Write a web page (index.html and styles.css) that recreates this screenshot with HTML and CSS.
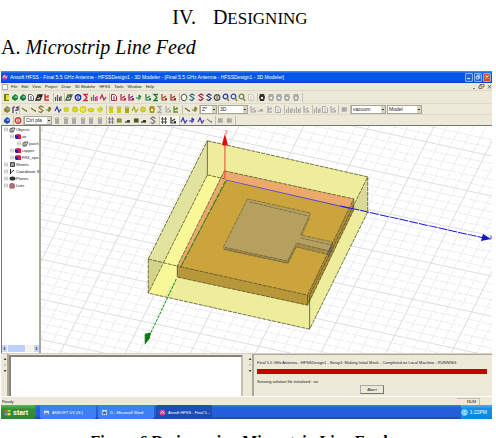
FILE: index.html
```html
<!DOCTYPE html>
<html lang="en">
<head>
<meta charset="utf-8">
<title>IV. Designing</title>
<link rel="stylesheet" href="styles.css">
</head>
<body>
<h1>IV.<span class="heading-name">D<small>ESIGNING</small></span></h1>
<h2>A. <em>Microstrip Line Feed</em></h2>
<figure>
  <div class="desktop">
    <header class="titlebar">
      <svg class="app-icon" viewBox="0 0 8 8"><circle cx="4" cy="4" r="3.5" fill="#d5487c"/><path d="M1 5l2-3 2 3 2-2" fill="none" stroke="#fff"/></svg>
      <span class="title">Ansoft HFSS - Final 5.5 GHz Antenna - HFSSDesign1 - 3D Modeler - [Final 5.5 GHz Antenna - HFSSDesign1 - 3D Modeler]</span>
      <button class="win" aria-label="Minimize"><svg viewBox="0 0 8 8"><path d="M2 6h3" stroke="#fff" stroke-width="1.6"/></svg></button>
      <button class="win" aria-label="Restore"><svg viewBox="0 0 8 8"><path d="M3 3V1.5h3.5V5H5M1.5 3.5H5v3H1.5z" fill="none" stroke="#fff"/></svg></button>
      <button class="win close" aria-label="Close"><svg viewBox="0 0 8 8"><path d="M2 2l4 4M6 2L2 6" stroke="#fff" stroke-width="1.4"/></svg></button>
    </header>
    <nav class="menubar">
      <svg class="doc-icon" viewBox="0 0 6 6"><path d="M.5.5h5v5h-5z" fill="#fff" stroke="#aaa"/></svg>
      <a href="#">File</a><a href="#">Edit</a><a href="#">View</a><a href="#">Project</a><a href="#">Draw</a><a href="#">3D Modeler</a><a href="#">HFSS</a><a href="#">Tools</a><a href="#">Window</a><a href="#">Help</a>
      <span class="mdi"><svg viewBox="0 0 20 7"><path d="M1 5.5h2M8 3V1.5h4V4h-1M7 3h3v2.500H7zM16 2l3 3.500M19 2l-3 3.500" fill="none" stroke="#555" stroke-width=".8"/></svg></span>
    </nav>
    <div class="toolbar row-file">
      <div class="group" data-icons="book:#777c00 cubes:#188a28 cubes:#167e30 page:#667 pen:#222 cut:#d02828"></div>
      <div class="group" data-icons="bars:#555"></div>
      <div class="group" data-icons="pen:#464 ring:#2029a8 zig:#d22050 bars:#e0208c wave:#b12350"></div>
      <div class="group" data-icons="page:#a03050 chart:#b62448 chart:#8a2070 arrow:#238a48 chart:#288050 zig:#237c40 chart:#a04028 chart:#a02828"></div>
      <div class="group" data-icons="hand:#555 turn:#246a88 turn:#a02050 turn:#223c80 ring:#555 lens:#2838b8 lens:#3450a0 lens:#7b8030 page:#ccc8b8"></div>
      <div class="group" data-icons="robot:#333 robot:#aaa robot:#aaa robot:#aaa robot:#aaa"></div>
    </div>
    <div class="toolbar row-draw">
      <div class="group" data-icons="cubes:#8b8428 help:#335"></div>
      <div class="group" data-icons="line:#777820 line:#777820 turn:#8b7130 arrow:#6b7130 wave:#343ba8 box:#d8d810 disc:#dddc00 ring:#d8cf00 oval:#dddc00 cubes:#dddc20"></div>
      <div class="group" data-icons="can:#d4d000 can:#d4c800 can:#a8aa00 wave:#a8aa00 disc:#d8d420 robot:#b09a20 zig:#aaa chart:#aaa cut:#668a20"></div>
      <div class="group" data-icons="line:#666a20 arrow:#777820"></div>
      <select aria-label="Plane"><option>Z*</option></select>
      <select aria-label="Movement"><option>3D</option></select>
      <div class="group" data-icons="chart:#aaa flag:#aaa cut:#aaa page:#aaa"></div>
      <div class="group" data-icons="bars:#aaa bars:#aaa chart:#aaa"></div>
      <div class="group" data-icons="bars:#aaa page:#aaa chart:#aaa"></div>
      <div class="group" data-icons="box:#aaa"></div>
      <select aria-label="Material"><option>vacuum</option></select>
      <select aria-label="Type"><option>Model</option></select>
    </div>
    <div class="toolbar row-snap">
      <div class="group" data-icons="cubes:#174dc0"></div>
      <div class="group" data-icons="ring:#c63b3b"></div>
      <select aria-label="Object"><option>Ctrl pla</option></select>
      <div class="group" data-icons="can:#aaa can:#aaa can:#aaa can:#aaa can:#aaa can:#aaa"></div>
      <div class="group" data-icons="grid:#777 box:#8a9028 flag:#444 box:#4d5520 flag:#333 turn:#777"></div>
      <div class="group pressed" data-icons="grid:#444 chart:#333"></div>
      <div class="group" data-icons="wave:#3338a8 arrow:#3338a8 wave:#4438a8 line:#888"></div>
      <div class="group" data-icons="box:#aaa box:#aaa"></div>
    </div>
    <main class="workspace">
      <aside class="side">
        <ul class="tree">
          <li data-node="wire"><span>Objects</span></li>
          <li class="l1" data-node="cube"><span>air</span></li>
          <li class="l2" data-node="wire"><span>patch</span></li>
          <li class="l1" data-node="cube"><span>copper</span></li>
          <li class="l1" data-node="cube"><span>FR4_epo</span></li>
          <li data-node="sheet"><span>Sheets</span></li>
          <li data-node="axes"><span>Coordinate S</span></li>
          <li data-node="plane"><span>Planes</span></li>
          <li data-node="list"><span>Lists</span></li>
        </ul>
        <div class="hscroll"><button aria-label="Scroll left">‹</button><i></i><button aria-label="Scroll right">›</button></div>
      </aside>
      <svg class="scene" viewBox="41 126 450 227" preserveAspectRatio="xMidYMid slice" role="img" aria-label="Patch antenna model">
        <g id="grid"></g>
        <!-- air box -->
        <path d="M207 141L367 177V212L309 329L148 293V259Z" fill="#eded9b"/>
        <path d="M207 141V175L148 293V259Z" fill="#e2e39e"/>
        <path d="M207 175L224 179L178 277L162 297L148 293Z" fill="#f8f898"/>
        <path d="M367 177V212L352 209Z" fill="#d9d999"/>
        <path d="M148 259L162 262L148 293Z" fill="#d3d38b"/>
        <!-- substrate -->
        <path d="M224 171L353 199V210L307 305L177 277V266Z" fill="#eba96c"/>
        <path d="M226 181L351 208L307 295L180 267Z" fill="#cba53b"/>
        <path d="M177 266L307 295V305L177 277Z" fill="#b8963a"/>
        <path d="M353 200L353 210L307 305V295Z" fill="#b08c35"/>
        <!-- patch and feed -->
        <path d="M247 202L310 217L301 238L332 245L329 255L296 247L288 264L223 250Z" fill="#a38c49"/>
        <path d="M247 199L310 213L300 235L332 242L329 251L296 243L287 261L223 247Z" fill="#b6a05f"/>
        <path d="M332 242V250L327 259L328 250Z" fill="#6d706e"/>
        <g class="edges">
          <path d="M207 141L367 177L309 295M148 259L207 141M367 177V212L309 329L148 293V259M207 175L148 293M207 175L224 179M148 259L177 266"/>
          <path class="solid" d="M207 141V175M309 295V329M177 266V277M307 295V305"/>
          <path d="M224 171L353 199L307 295L177 266ZM353 199V210L307 305L177 277M226 181L180 267"/>
          <path class="thin" d="M247 199L310 213L300 235L332 242L329 251L296 243L287 261L223 247ZM249 202L308 216M300 238L331 245M296 247L329 255M223 249L287 263L296 246"/>
        </g>
        <path d="M225 180L352 209" stroke="#5548d8"/>
        <path d="M340 206L483 238" stroke="#1a1ae0" stroke-dasharray="9 1"/>
        <path d="M482 234L490 239L480 241Z" fill="#1115c8"/><path d="M489 236l2 3M491 236l-2 4" stroke="#5555ee" stroke-width=".7"/>
        <path d="M225 181L180 268" stroke="#329321" stroke-dasharray="5 2"/>
        <path d="M176 279L149 336" stroke="#179a20" stroke-dasharray="3 1"/>
        <path d="M145 334L150 333L149 338L145 343Z" fill="#08780e" stroke="#08780e"/>
        <path d="M224.500 179V144" stroke="#f04538"/>
        <path d="M224.500 134L221.500 145Q224.500 147 227.500 145Z" fill="#e00c12"/><path d="M225 131h2l-2 3h2" fill="none" stroke="#f05555" stroke-width=".7"/>
      </svg>
    </main>
    <section class="docks">
      <div class="handle"><b>▴</b><b>▫</b><b>▾</b></div>
      <div class="messages"></div>
      <div class="handle"><b>▴</b><b>▫</b><b>▾</b></div>
      <div class="progress">
        <label for="run">Final 5.5 GHz Antenna - HFSSDesign1 - Setup1: Making Initial Mesh - Completed on Local Machine - RUNNING</label>
        <progress id="run" value="100" max="100"></progress>
        <p>Sensing solution file initialized : no</p>
        <button class="abort">Abort</button>
      </div>
    </section>
    <footer class="status"><span>Ready</span><span class="num">NUM</span></footer>
    <nav class="taskbar">
      <button class="start"><svg viewBox="0 0 8 8"><path d="M.5 1.500L3.500 1v2.800L.5 4z" fill="#f05030"/><path d="M4 1l3.500-.5V3.500L4 3.800z" fill="#8cdd38"/><path d="M.5 4.500h3V7.500L.5 7z" fill="#5797ff"/><path d="M4 4.500h3.500V7L4 7.500z" fill="#ffd438"/></svg>start</button>
      <button class="task"><svg viewBox="0 0 8 8"><path d="M1 2h6v4H1z" fill="#d8dcea"/><path d="M2 5h4" stroke="#555"/></svg>ANSOFT UV (G:)</button>
      <button class="task"><svg viewBox="0 0 8 8"><path d="M1 1h6v6H1z" fill="#cfdcff"/><path d="M2 3l1 3 1-3 1 3 1-3" fill="none" stroke="#2448a0"/></svg>D - Microsoft Word</button>
      <button class="task active"><svg viewBox="0 0 8 8"><circle cx="4" cy="4" r="3.300" fill="#d8488c"/><path d="M2 5l2-2 2 2" fill="none" stroke="#fff"/></svg>Ansoft HFSS - Final 5...</button>
      <span class="tray"><svg viewBox="0 0 8 8"><circle cx="4" cy="4" r="3.300" fill="#59c3ff" stroke="#c9edff" stroke-width=".7"/><path d="M5 2L3 4l2 2" fill="none" stroke="#fff"/></svg>1:22PM</span>
    </nav>
  </div>
  <figcaption>Figure 6 Design using Microstrip Line Feed</figcaption>
</figure>
<script src="app.js"></script>
</body>
</html>
```
FILE: styles.css
```css
* { box-sizing: border-box; }
html, body { height: 100%; }
body { margin: 0; overflow: hidden; background: #fff; color: #000; font-family: "Liberation Serif", serif; }
h1 { height: 28px; margin: 0; padding: 6px 16px 0 0; font-size: 20px; line-height: 22px; font-weight: 400; text-align: center; }
h1 small { font-size: 17px; }
.heading-name { margin-left: 17px; }
h2 { margin: 0; padding: 8px 0 0 1px; font-size: 20px; line-height: 22px; font-weight: 400; }
figure { margin: 13px 4px 0 1px; }
figcaption { margin: 13px 15px 0 0; text-align: center; font-size: 16px; line-height: 20px; font-weight: 700; }
.desktop { background: #ece9d8; font-family: "Liberation Sans", sans-serif; font-size: 4px; line-height: 7px; color: #222; }
button, select { margin: 0; padding: 0; border: 0; background: none; font: inherit; color: inherit; }
svg { display: block; }

.titlebar { display: flex; align-items: center; height: 12px; padding: 0 1px; background: linear-gradient(#4b97f5, #0554e4 20%, #0558ee 75%, #0343bd); color: #fff; font-size: 5px; }
.app-icon { width: 6px; height: 6px; margin-right: 2px; }
.title { flex: 1; white-space: nowrap; overflow: hidden; }
.win { width: 8px; height: 9px; margin-left: 1px; border: 1px solid #8cb0f8; border-radius: 1px; background: #2762dd; }
.win.close { background: #dd4b27; }

.menubar { display: flex; align-items: center; gap: 4px; height: 8px; padding-left: 1px; border-bottom: 1px solid #dcd8c8; }
.menubar a { color: #222; text-decoration: none; white-space: nowrap; }
.doc-icon { width: 6px; height: 6px; margin-right: -1px; }
.mdi { width: 20px; margin-left: auto; }

.toolbar { display: grid; align-items: center; height: 11px; padding-left: 2px; border-bottom: 1px solid #dedac9; }
.row-file { height: 13px; grid-template-columns: 51px 11px 45px 70px 78px 45px; }
.row-draw { grid-template-columns: 17px 87px 76px 17px 18px 31px 36px 28px 26px 12px 36px 36px; }
.row-snap { border-bottom: 1px solid #777; grid-template-columns: 11px 10px 29px 54px 53px 20px 36px 20px; }
.group { display: flex; justify-content: space-around; padding-right: 2px; border-right: 1px solid #c4c0ae; }
.group.pressed { background: #f8f7f0; }
.tool { width: 8px; height: 9px; flex: none; }
.tool svg { width: 8px; height: 9px; }
.toolbar select { height: 9px; margin-right: 1px; padding-left: 1px; border: 1px solid #a8a595; border-radius: 0; appearance: none; font-size: 5px; background: linear-gradient(#333, #333) right 1px center / 2px 1px no-repeat, linear-gradient(#d8d4c4, #d8d4c4) right / 4px 100% no-repeat, #fff; }

.workspace { display: flex; height: 227px; background: #fff; }
.side { flex: none; display: flex; flex-direction: column; width: 40px; border-left: 1px solid #777; border-right: 2px solid #aaa79b; }
.tree { flex: 1; margin: 0; padding: 0 0 0 1px; list-style: none; }
.tree li { display: flex; align-items: center; height: 7px; white-space: nowrap; }
.tree .l1 { padding-left: 6px; }
.tree .l2 { padding-left: 13px; }
.tree svg { flex: none; width: 13px; height: 7px; }
.hscroll { display: flex; height: 7px; margin-bottom: 1px; background: #f4f3ee; font-size: 7px; }
.hscroll button { width: 5px; background: #c8d8fc; color: #234; font-weight: 700; line-height: 5px; }
.hscroll i { width: 17px; margin: 0 auto 0 1px; background: #bdd0fb; border-radius: 1px; }
.scene { flex: 1; min-width: 0; height: 227px; }
.minor { stroke: #ececef; stroke-dasharray: 5 1; }
.major { stroke: #dedee1; }
.edges path { fill: none; stroke: #55542f; stroke-width: .8; stroke-dasharray: 4 1; }
.edges .solid { stroke-dasharray: none; }
.edges .thin { stroke: #5b5230; stroke-width: .6; }

.docks { display: flex; height: 44px; border-top: 1px solid #d8d4c4; border-bottom: 1px solid #fff; }
.handle { flex: none; display: flex; flex-direction: column; width: 8px; padding: 2px 0 0 3px; line-height: 6px; border-right: 2px solid #aaa797; }
.messages { flex: 1 1 0; margin: 1px 3px 0 0; border: 2px solid #858379; border-right-color: #c4c1b3; border-bottom: 0; background: #fff; }
.progress { flex: 1 1 0; min-width: 0; padding: 4px 5px 0 3px; border-top: 1px solid #aaa797; white-space: nowrap; }
.progress label { display: block; }
.progress progress { display: block; width: 100%; height: 5px; margin-top: 3px; appearance: none; border: 0; }
progress::-webkit-progress-bar { background: #ddd; }
progress::-webkit-progress-value { background: #c50000; }
.progress p { margin: 4px 0 0; }
.abort { display: block; width: 24px; height: 9px; margin: 0 auto; border: 1px solid #77746a; border-top-color: #aaa; border-left-color: #aaa; line-height: 6px; }

.status { display: flex; justify-content: space-between; height: 8px; padding: 1px 12px 0 1px; }
.num { padding: 0 3px 0 10px; border-top: 1px solid #c4c0ae; border-right: 1px solid #c4c0ae; line-height: 6px; }

.taskbar { display: flex; height: 14px; gap: 2px; background: linear-gradient(#3c7cf0, #245edb 20%, #245edb 80%, #1c479c); color: #fff; }
.taskbar svg { width: 7px; height: 7px; flex: none; }
.taskbar button, .tray { display: flex; align-items: center; gap: 2px; white-space: nowrap; }
.start { width: 35px; margin-right: 2px; border-radius: 0 4px 4px 0; background: linear-gradient(#62b562, #338f36 30%, #2c8630); font-size: 7px; font-weight: 700; }
.task { flex: 0 1 56px; border-radius: 2px; background: #3c80f2; }
.task.active { background: #1c4cb8; }
.taskbar .start, .taskbar .task { padding-left: 3px; }
.tray { margin-left: auto; padding: 0 5px 0 0; background: linear-gradient(#43b6f7, #1290e9 25%, #0f85dd); font-size: 5px; }
```
FILE: app.js
```js
// Glyphs are drawn on an 8 by 9 canvas; "c" is replaced by the tool colour.
const glyphs = {
  book: '<path d="M1 1h5v7H1z" fill="c"/><path d="M3 2h3v5H3z" fill="#e8df30"/>',
  cubes: '<path d="M1 4l3-3 3 2v3L4 8 1 6z" fill="c"/><path d="M3 4l2-1 2 1-2 1z" fill="#9cb9e8"/>',
  page: '<path d="M1.5 1.500h3l2 2v4h-5zM3 4h2M3 6h2" fill="#f5f4ee" stroke="c"/>',
  pen: '<path d="M1 7l2-5h4l-2 5zM3 5l3-3" fill="none" stroke="c" stroke-width="1.300"/>',
  cut: '<path d="M2 1v6h4M2 4h3V2" fill="none" stroke="c" stroke-width="1.300"/>',
  bars: '<path d="M1.500 8V4M3.500 8V2M5.500 8V4M7 8V3" stroke="c" stroke-width="1.200"/>',
  ring: '<circle cx="4" cy="4.500" r="2.700" fill="none" stroke="c" stroke-width="1.400"/><path d="M4 3v3" stroke="c"/>',
  zig: '<path d="M6 1.500H2l3 3-3 3h4" fill="none" stroke="c" stroke-width="1.300"/>',
  wave: '<path d="M1 6l2-4 2 5 2-3" fill="none" stroke="c" stroke-width="1.200"/>',
  chart: '<path d="M2 1v6h5M3 5l3-2" fill="none" stroke="c" stroke-width="1.200"/><path d="M5 5h2v2H5z" fill="c"/>',
  arrow: '<path d="M1 5h5M4 2v5M4 2l2 2" fill="none" stroke="c" stroke-width="1.200"/>',
  hand: '<path d="M2 7L1 4l1-2 2-1 2 1 1 3-2 3z" fill="#f5f3e8" stroke="c"/>',
  turn: '<path d="M6.500 2.500L4 1 2 2.500l4 3L4 7.500 1.500 6.500" fill="none" stroke="c" stroke-width="1.300"/>',
  lens: '<circle cx="3.500" cy="3.500" r="2.300" fill="#e4edff" stroke="c" stroke-width="1.300"/><path d="M5 5l2 3" stroke="#8b8a30" stroke-width="1.500"/>',
  robot: '<path d="M2 1h4l1 3-1 4H2L1 4z" fill="c"/><path d="M3 4h2v2H3z" fill="#eee"/>',
  help: '<path d="M2 2v6M2 2h2M5 3l2-1v3H5v1M5 8h1" fill="none" stroke="c" stroke-width="1.200"/>',
  line: '<path d="M2 3l4 3" stroke="c" stroke-width="1.200"/><path d="M6 6h1" stroke="#222"/>',
  box: '<path d="M2 2.500h4.500v4H2z" fill="c" stroke="#7774" stroke-width=".7"/>',
  disc: '<circle cx="4" cy="4.500" r="2.700" fill="c" stroke="#7776" stroke-width=".7"/>',
  oval: '<ellipse cx="4" cy="5" rx="3" ry="2" fill="c" stroke="#7776" stroke-width=".7"/>',
  can: '<path d="M2 2h4v6H2z" fill="c"/><ellipse cx="4" cy="2.500" rx="2" ry="1" fill="#ddd9b8" stroke="#777" stroke-width=".4"/>',
  flag: '<path d="M1 6h5" stroke="c" stroke-width="1.300"/><path d="M3 4h3v2H3z" fill="c"/>',
  grid: '<path d="M1 3h6M1 6h6M2.500 1v7M5.500 1v7" stroke="c" stroke-width=".9"/>'
};
document.querySelectorAll('.group').forEach(group => {
  group.innerHTML = group.dataset.icons.split(' ').map(item => {
    const [name, color] = item.split(':');
    return `<button class="tool" aria-label="${name}"><svg viewBox="0 0 8 9">${glyphs[name].replaceAll('"c"', `"${color}"`)}</svg></button>`;
  }).join('');
});

const nodes = {
  wire: '<path d="M7 3l2-1h3l-2 4H7zM9 2v4" fill="none" stroke="#555"/>',
  cube: '<path d="M6 2l3-1 3 1v4H7L6 5z" fill="#1a28b0"/><path d="M6 2l3-1 3 1-3 1z" fill="#e83838"/><path d="M9 3l3-1v4H9z" fill="#d01c40"/>',
  sheet: '<path d="M7.500 1.500h4v4h-4z" fill="#999" stroke="#444"/>',
  axes: '<path d="M7.500 1v5M7.500 5L11 2" fill="none" stroke="#222"/>',
  plane: '<ellipse cx="9.500" cy="3.500" rx="3" ry="2" fill="#333"/>',
  list: '<path d="M7 2h4v4H7zM9 1v5M7 4h5" fill="none" stroke="#943848"/>'
};
document.querySelectorAll('.tree li').forEach(item => {
  item.insertAdjacentHTML('afterbegin', `<svg viewBox="0 0 13 7"><path d="M1.500 2h3v3h-3zM2 3.500h2" fill="#fff" stroke="#aaa" stroke-width=".6"/>${nodes[item.dataset.node]}</svg>`);
});

// Drawing plane: two families of lines, every fifth one heavier.
let lines = '';
for (let k = -12; k < 28; k++) {
  const y = 139 + 8 * k;
  lines += `<path class="${k % 5 ? 'minor' : 'major'}" d="M40 ${y}L760 ${y + 155}"/>`;
}
for (let k = -5; k < 50; k++) {
  const x = 109 + 13 * k;
  lines += `<path class="${k % 5 ? 'minor' : 'major'}" d="M${x} 125L${x - 115} 355"/>`;
}
document.getElementById('grid').innerHTML = lines;
```
